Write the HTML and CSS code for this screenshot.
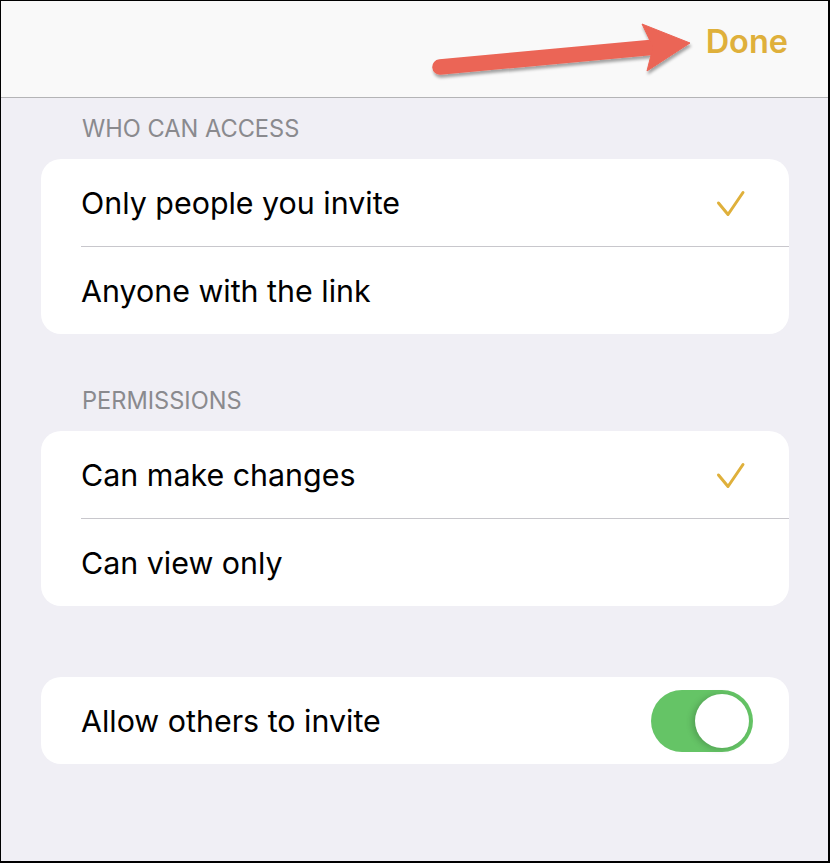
FILE: index.html
```html
<!DOCTYPE html>
<html lang="en">
<head>
    <meta charset="UTF-8">
    <meta name="viewport" content="width=device-width, initial-scale=1.0">
    <title>Share Options</title>
    <link rel="stylesheet" href="styles.css">
</head>
<body>
    <div class="screen">
        <header class="navbar">
            <svg class="arrow" width="830" height="96" viewBox="0 0 830 96">
                <defs>
                    <filter id="arrowShadow" x="-10%" y="-50%" width="120%" height="200%">
                        <feDropShadow dx="1" dy="3" stdDeviation="1.5" flood-color="#000" flood-opacity="0.35"/>
                    </filter>
                </defs>
                <g filter="url(#arrowShadow)" fill="#eb6556" stroke="#eb6556">
                    <line x1="439" y1="66" x2="655" y2="46" stroke-width="15.5" stroke-linecap="round"/>
                    <polygon points="641,23 689,42 646,70 652,46" stroke-width="1" stroke-linejoin="round"/>
                </g>
            </svg>
            <span class="done">Done</span>
        </header>

        <main class="settings">
            <section class="group">
                <h3 class="group-title">WHO CAN ACCESS</h3>
                <ul class="card">
                    <li class="row">
                        <span>Only people you invite</span>
                        <svg class="check" width="30" height="28" viewBox="0 0 30 28">
                            <polyline points="2.5,13 12,24.5 27,2.5" fill="none" stroke="#dfb03b" stroke-width="3" stroke-linecap="round" stroke-linejoin="round"/>
                        </svg>
                    </li>
                    <li class="row"><span>Anyone with the link</span></li>
                </ul>
            </section>

            <section class="group">
                <h3 class="group-title">PERMISSIONS</h3>
                <ul class="card">
                    <li class="row">
                        <span>Can make changes</span>
                        <svg class="check" width="30" height="28" viewBox="0 0 30 28">
                            <polyline points="2.5,13 12,24.5 27,2.5" fill="none" stroke="#dfb03b" stroke-width="3" stroke-linecap="round" stroke-linejoin="round"/>
                        </svg>
                    </li>
                    <li class="row"><span>Can view only</span></li>
                </ul>
            </section>

            <section class="group group-plain">
                <ul class="card">
                    <li class="row row-toggle">
                        <span>Allow others to invite</span>
                        <div class="switch on"></div>
                    </li>
                </ul>
            </section>
        </main>
    </div>
</body>
</html>
```

FILE: styles.css
```css
* {
    box-sizing: border-box;
}
body {
    margin: 0;
    font-family: 'Inter', 'Noto Sans', sans-serif;
    background-color: #ffffff;
}
.screen {
    width: 830px;
    height: 863px;
    border-top: 1px solid #000;
    border-left: 1px solid #000;
    border-right: 2px solid #000;
    border-bottom: 2px solid #000;
    background-color: #f0eff5;
    overflow: hidden;
}
.navbar {
    position: relative;
    height: 97px;
    background-color: #f9f9f9;
    border-bottom: 1px solid #b4b4b6;
    display: flex;
    justify-content: flex-end;
    align-items: flex-start;
    padding: 21px 40px 0 0;
}
.arrow {
    position: absolute;
    left: 0;
    top: 0;
}
.done {
    position: relative;
    font-size: 32.5px;
    line-height: 40px;
    font-weight: 600;
    color: #dfb03b;
}
.settings {
    padding: 0 39px 0 40px;
}
.group-title {
    margin: 19px 0 18px;
    padding-left: 41px;
    font-size: 23.6px;
    line-height: 24px;
    font-weight: 400;
    color: #8a8a8e;
}
.group + .group .group-title {
    margin-top: 55px;
}
.group-plain {
    margin-top: 71px;
}
.card {
    list-style: none;
    margin: 0;
    padding: 0 0 0 40px;
    background-color: #ffffff;
    border-radius: 20px;
}
.row {
    height: 87px;
    display: flex;
    align-items: center;
    justify-content: space-between;
    padding-right: 43px;
    font-size: 30.4px;
    color: #000;
}
.row + .row {
    height: 88px;
    border-top: 1px solid #c8c7cc;
}
.check {
    display: block;
    margin-top: 2px;
}
.row-toggle {
    padding-right: 36px;
}
.switch {
    position: relative;
    width: 102px;
    height: 62px;
    border-radius: 31px;
    background-color: #e9e9ea;
}
.switch.on {
    background-color: #65c466;
}
.switch::after {
    content: '';
    position: absolute;
    top: 4px;
    left: 4px;
    width: 54px;
    height: 54px;
    border-radius: 50%;
    background-color: #ffffff;
    box-shadow: -3px 1px 6px rgba(0, 0, 0, 0.18);
}
.switch.on::after {
    left: 44px;
}
```
